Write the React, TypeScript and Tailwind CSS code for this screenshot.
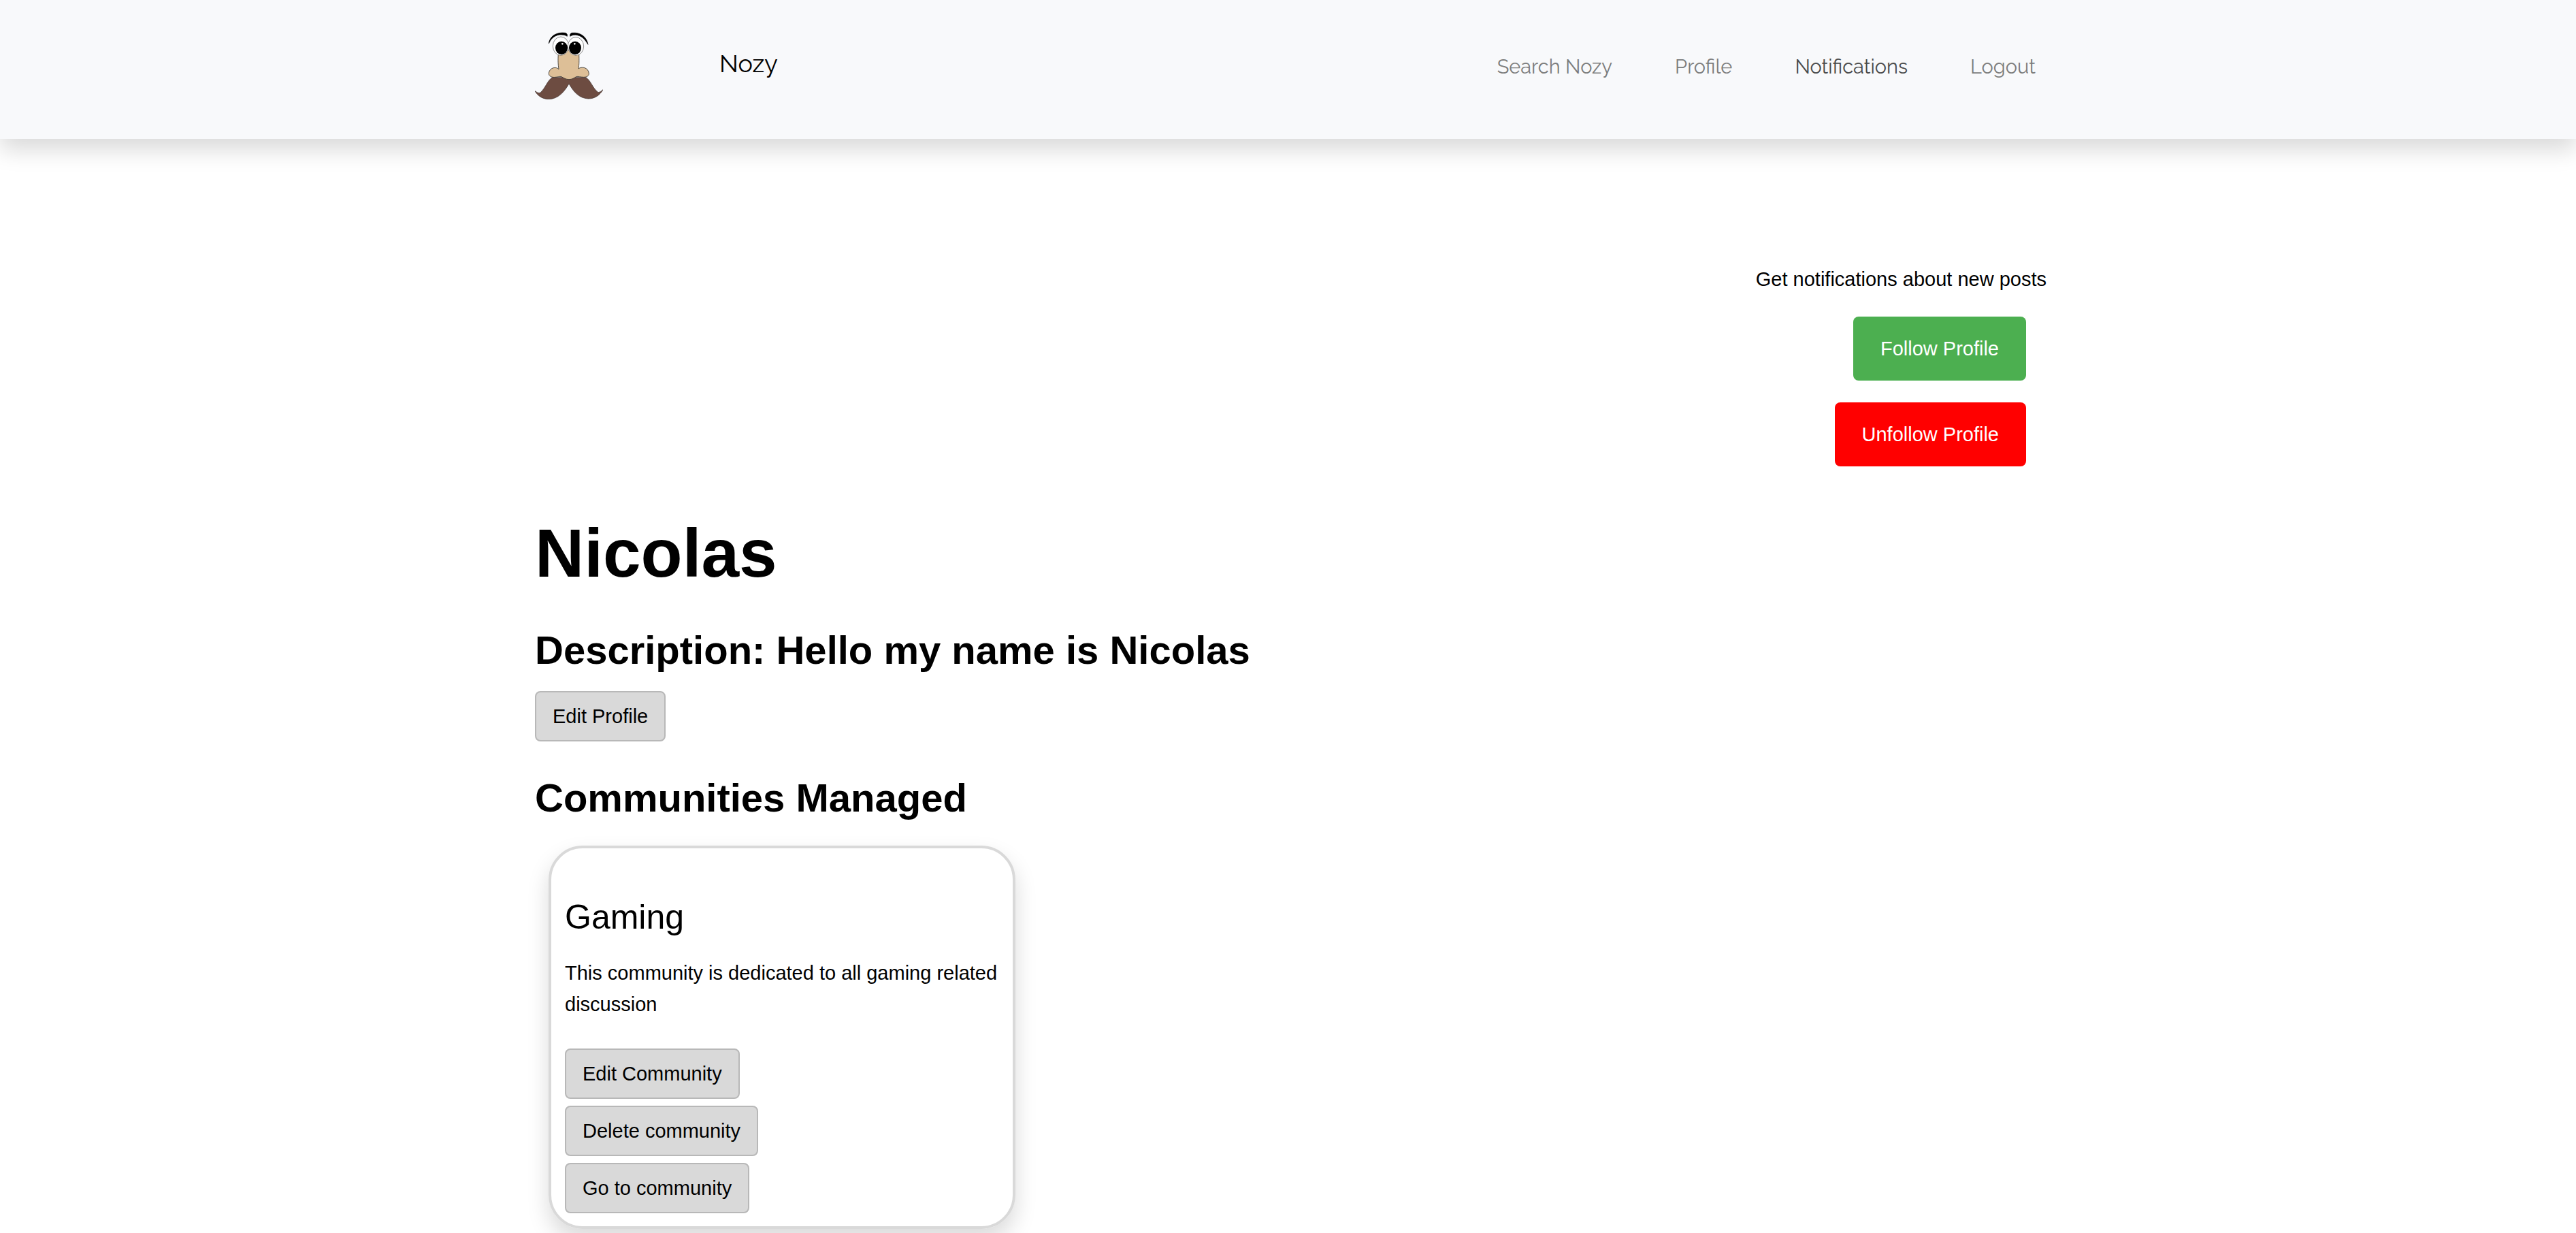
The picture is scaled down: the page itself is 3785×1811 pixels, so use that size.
import type { ReactNode } from "react";

function Logo() {
  return (
    <svg viewBox="48 48 300 300" className="size-[100px]" role="img" aria-label="Nozy logo">
      <path
        d="M48 311 C56 316 62 321 71 319 C96 296 101 267 124 251 L273 251 C296 267 302 298 327 317 C335 316 341 311 348 305 C334 330 312 345 283 345 C242 343 218 314 198 279 C178 315 149 347 108 347 C80 346 60 332 48 311Z"
        fill="#6d4c41"
        stroke="#3d2d2a"
        strokeWidth="2"
        strokeLinejoin="round"
      />
      <path
        d="M151 145 C149 175 150 195 153 215 C143 203 113 206 109 232 C108 247 124 252 138 250 C148 250 156 245 165 248 C176 254 184 260 198 260 C212 260 220 254 230 248 C240 245 248 250 262 250 C275 250 286 246 286 234 C284 206 252 202 240 213 C243 195 243 175 242 145 L197 130Z"
        fill="#ddbf97"
        stroke="#33302c"
        strokeWidth="2.5"
        strokeLinejoin="round"
      />
      <ellipse cx="162" cy="113" rx="35" ry="41" fill="#fff" stroke="#555" strokeWidth="2" />
      <ellipse cx="228" cy="114" rx="35" ry="40" fill="#fff" stroke="#555" strokeWidth="2" />
      <ellipse cx="165" cy="121" rx="27" ry="29" fill="#000" />
      <ellipse cx="225" cy="121" rx="27" ry="29" fill="#000" />
      <circle cx="169" cy="103" r="4" fill="#eee" />
      <circle cx="223" cy="103" r="4" fill="#eee" />
      <path
        d="M109 102 C112 70 143 50 181 55 C190 57 192 64 190 70 C182 64 170 62 156 63 C132 67 118 82 109 102Z"
        fill="#000"
        stroke="#000"
        strokeWidth="2"
      />
      <path
        d="M282 106 C277 73 249 51 212 55 C203 57 202 64 203 70 C212 64 222 62 235 65 C259 70 271 88 282 106Z"
        fill="#000"
        stroke="#000"
        strokeWidth="2"
      />
    </svg>
  );
}

const navLinks = [
  { label: "Search Nozy", active: false },
  { label: "Profile", active: false },
  { label: "Notifications", active: true },
  { label: "Logout", active: false },
];

function Header() {
  return (
    <header className="bg-[#f8f9fb] pt-[46px] pb-[58px] shadow-[0_16px_32px_rgba(0,0,0,0.15)]">
      <div className="mx-auto flex max-w-[2229px] items-start justify-between pr-4 pl-2 font-['Raleway','Lato',sans-serif]">
        <a href="#home" className="flex items-start gap-[171px] text-black">
          <Logo />
          <span className="pt-[23px] text-[36px] leading-[48px]">Nozy</span>
        </a>
        <nav className="flex gap-[92px] pt-7 text-[29px] leading-[48px]">
          {navLinks.map((link) => (
            <a
              key={link.label}
              href={`#${link.label}`}
              className={link.active ? "text-[#4a4b4b]" : "text-[#7c7d7d]"}
            >
              {link.label}
            </a>
          ))}
        </nav>
      </div>
    </header>
  );
}

function GreyButton({ children }: { children: ReactNode }) {
  return (
    <button
      type="button"
      className="rounded-lg border-2 border-[#b8b8b8] bg-[#d9d9d9] px-6 py-3 leading-[46px] text-black"
    >
      {children}
    </button>
  );
}

export default function App() {
  return (
    <div className="min-h-screen bg-white font-['Liberation_Sans',Arial,sans-serif] text-[29px] leading-[46px] text-black">
      <Header />
      <main className="mx-auto max-w-[2229px] pt-[183px] pl-2">
        <section className="flex flex-col items-end gap-8">
          <p>Get notifications about new posts</p>
          <button type="button" className="mr-[30px] rounded-lg bg-[#4caf50] px-10 py-6 text-white">
            Follow Profile
          </button>
          <button type="button" className="mr-[30px] rounded-lg bg-[#ff0000] px-10 py-6 text-white">
            Unfollow Profile
          </button>
        </section>

        <section className="flex flex-col items-start">
          <h1 className="mt-[67px] text-[100px] leading-[120px] font-bold">Nicolas</h1>
          <h2 className="mt-12 mb-[25px] text-[58px] leading-[70px] font-bold">
            Description: Hello my name is Nicolas
          </h2>
          <GreyButton>Edit Profile</GreyButton>
        </section>

        <section>
          <h2 className="mt-12 mb-[35px] text-[58px] leading-[70px] font-bold">Communities Managed</h2>
          <article className="ml-5 flex w-[686px] flex-col items-start rounded-[50px] border-4 border-[#d9d9d9] px-5 pt-[71px] pb-[19px] shadow-[0_16px_32px_rgba(0,0,0,0.15)]">
            <h3 className="text-[50px] leading-[60px]">Gaming</h3>
            <p className="mt-[29px] mb-[42px]">This community is dedicated to all gaming related discussion</p>
            <div className="flex flex-col items-start gap-[10px]">
              <GreyButton>Edit Community</GreyButton>
              <GreyButton>Delete community</GreyButton>
              <GreyButton>Go to community</GreyButton>
            </div>
          </article>
        </section>
      </main>
    </div>
  );
}
